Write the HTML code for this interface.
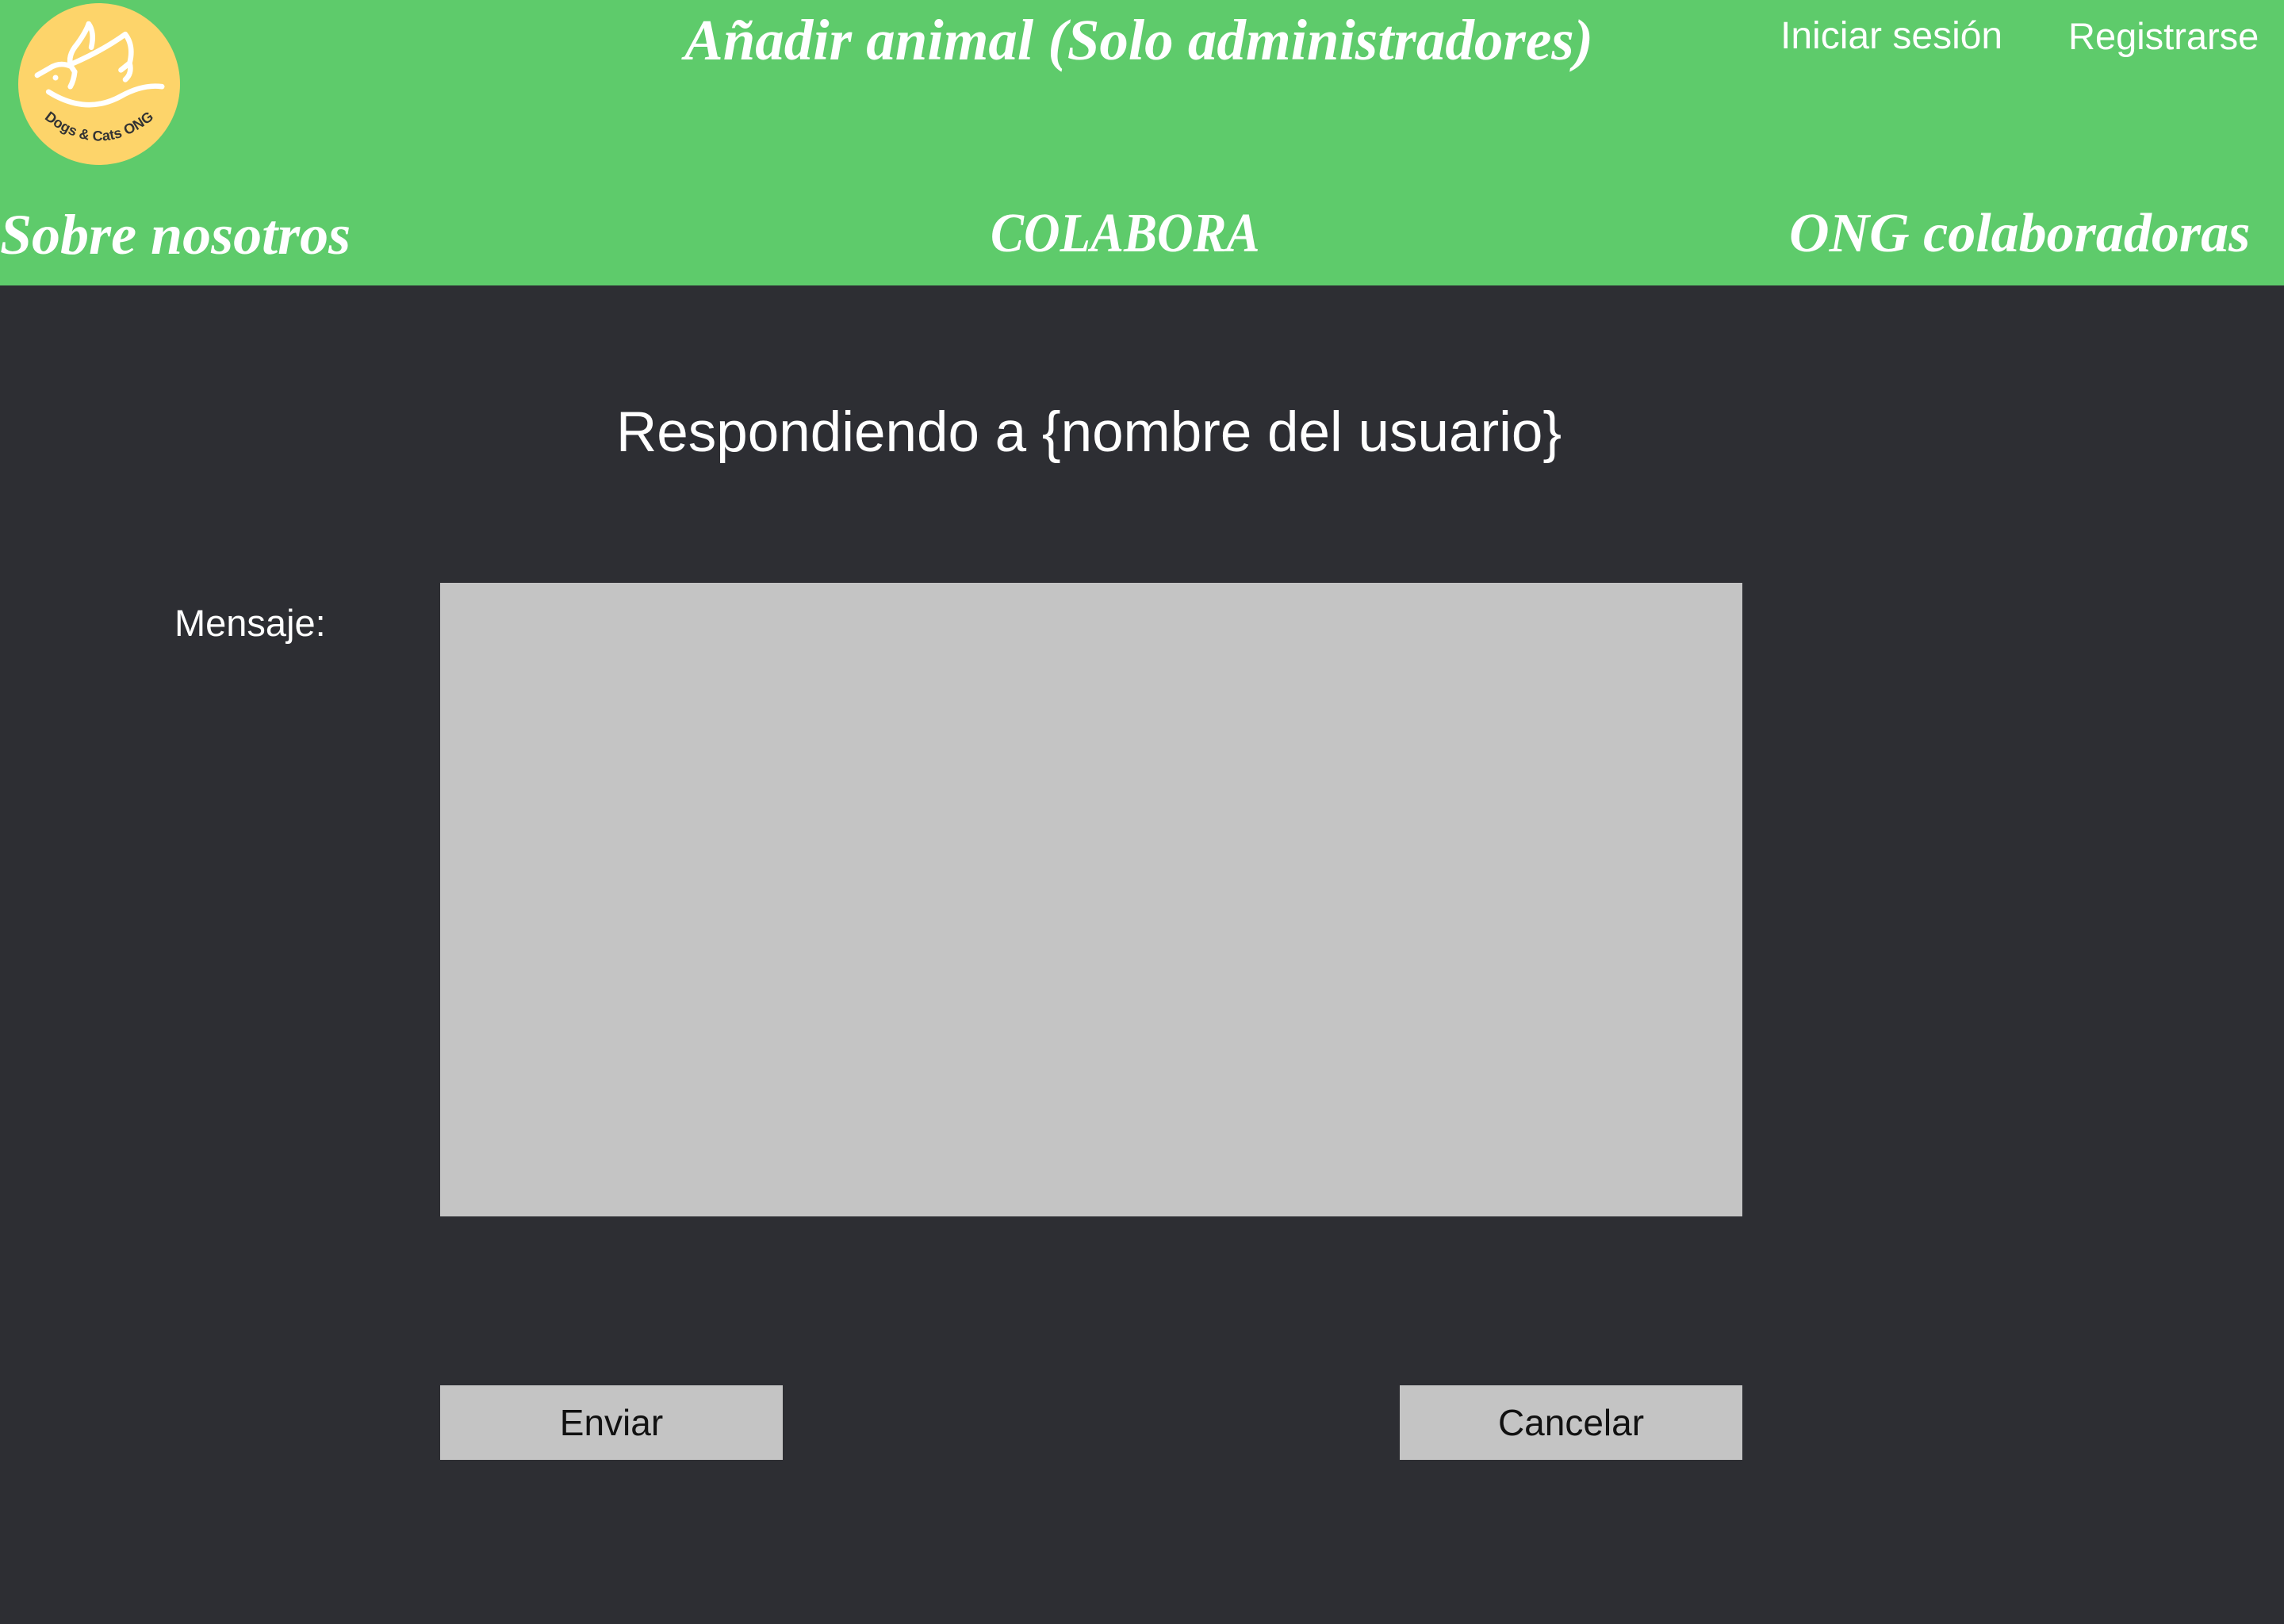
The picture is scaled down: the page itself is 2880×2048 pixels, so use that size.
<!DOCTYPE html>
<html><head><meta charset="utf-8"><style>
*{margin:0;padding:0;box-sizing:border-box}
html,body{width:2880px;height:2048px;overflow:hidden;background:#2d2e33;font-family:"Liberation Sans",sans-serif;color:#fff}
.hdr{position:absolute;left:0;top:0;width:2880px;height:360px;background:#5ecb6b}
.t{position:absolute;white-space:nowrap;line-height:1}
.serif{font-family:"Liberation Serif",serif;font-style:italic;font-weight:bold}
.ta{position:absolute;left:555px;top:735px;width:1642px;height:799px;background:#c4c4c4}
.btn{position:absolute;top:1747px;width:432px;height:94px;background:#c4c4c4;color:#111;font-size:46px;display:flex;align-items:center;justify-content:center}
</style></head><body>
<div class="hdr"></div>
<svg style="position:absolute;left:0;top:0" width="250" height="220" viewBox="0 0 250 220">
<circle cx="125" cy="106" r="102" fill="#fdd46a"/>
<g fill="none" stroke="#fff" stroke-width="6" stroke-linecap="round" stroke-linejoin="round" transform="translate(125,85) scale(1.1) translate(-125,-85)">
<path d="M54 94 L68 86 Q80 78 93 84 L97 90"/>
<path d="M67 113 Q110 140 150 118 Q175 104 197 107"/>
<path d="M93 84 Q88 72 100 58 Q110 44 113 35 Q120 45 116 62"/>
<path d="M97 90 Q96 100 92 107"/>
<path d="M96 80 Q130 65 155 47 Q165 60 160 80 L150 88"/>
<path d="M160 80 Q163 92 155 99"/>
</g>
<circle cx="70" cy="98" r="3.5" fill="#fff"/>
<defs><path id="arc" d="M45 140 Q125 215 205 140"/></defs>
<text font-family="Liberation Sans,sans-serif" font-weight="bold" font-size="18" fill="#333"><textPath href="#arc" startOffset="50%" text-anchor="middle">Dogs &amp; Cats ONG</textPath></text>
</svg>
<div class="t serif" style="left:863px;top:14px;font-size:73px">Añadir animal (Solo administradores)</div>
<div class="t" style="left:2245px;top:22px;font-size:48px">Iniciar sesión</div>
<div class="t" style="left:2608px;top:22px;font-size:47px">Registrarse</div>
<div class="t serif" style="left:0;top:260px;font-size:72px">Sobre nosotros</div>
<div class="t serif" style="left:1249px;top:260px;font-size:70px;transform:scaleX(0.9);transform-origin:0 0">COLABORA</div>
<div class="t serif" style="left:2256px;top:260px;font-size:70px">ONG colaboradoras</div>
<div class="t" style="left:777px;top:510px;font-size:71px">Respondiendo a {nombre del usuario}</div>
<div class="t" style="left:220px;top:762px;font-size:47px">Mensaje:</div>
<div class="ta"></div>
<div class="btn" style="left:555px">Enviar</div>
<div class="btn" style="left:1765px">Cancelar</div>
</body></html>
